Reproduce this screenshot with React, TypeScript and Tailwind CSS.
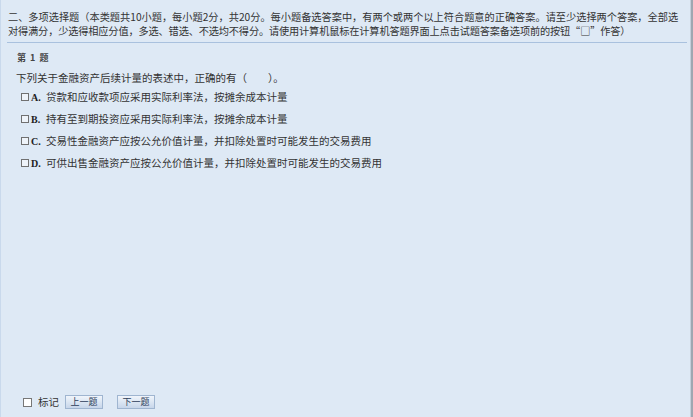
import React from "react";

const cjk = "font-['Noto_Sans_CJK_SC','Noto_Sans',sans-serif]";

function Box() {
  return <span className="inline-block w-[8px] h-[8px] border border-[#707070] bg-[#eef3f9] shrink-0" />;
}

const options = [
  { k: "A.", t: "贷款和应收款项应采用实际利率法，按摊余成本计量" },
  { k: "B.", t: "持有至到期投资应采用实际利率法，按摊余成本计量" },
  { k: "C.", t: "交易性金融资产应按公允价值计量，并扣除处置时可能发生的交易费用" },
  { k: "D.", t: "可供出售金融资产应按公允价值计量，并扣除处置时可能发生的交易费用" },
];

export default function App() {
  return (
    <div className={`w-[693px] h-[417px] bg-[#dee9f5] flex overflow-hidden text-[#333333] ${cjk}`}>
      <div className="flex-1 flex flex-col border-l border-[#c9d9ec] min-w-0">
        <div className="ml-[6px] mr-[3px] pt-[10px] pb-[4px] border-b border-[#a9c1de] text-[10.2px] leading-[14px] whitespace-nowrap pl-[1px]">
          <div>二、多项选择题（本类题共10小题，每小题2分，共20分。每小题备选答案中，有两个或两个以上符合题意的正确答案。请至少选择两个答案，全部选</div>
          <div className="tracking-[-0.15px]">对得满分，少选得相应分值，多选、错选、不选均不得分。请使用计算机鼠标在计算机答题界面上点击试题答案备选项前的按钮“□”作答）</div>
        </div>
        <div className="pl-[16px] pt-[9px] text-[9px] leading-[12px] font-semibold text-[#444] whitespace-pre [word-spacing:2px]">第 1 题</div>
        <div className="pl-[15px] mt-[7px] text-[10.5px] leading-[14px] whitespace-nowrap">
          下列关于金融资产后续计量的表述中，正确的有（　　）。
        </div>
        <div className="flex flex-col gap-[8px] mt-[5px] pl-[20px]">
          {options.map((o) => (
            <div key={o.k} className="flex items-center h-[14px] text-[10.5px] whitespace-nowrap">
              <Box />
              <span className="w-[17px] pl-[2px] font-['Liberation_Serif',serif] font-bold text-[10px] text-[#222]">{o.k}</span>
              <span>{o.t}</span>
            </div>
          ))}
        </div>
        <div className="mt-auto mb-[8px] pl-[22px] flex items-center h-[14px] text-[10.5px]">
          <span className="inline-block w-[9px] h-[9px] border border-[#777] bg-white" />
          <span className="ml-[6px]">标记</span>
          <button className="ml-[6px] w-[38px] h-[14px] border border-[#9fb5d0] bg-gradient-to-b from-[#f0f5fb] to-[#c7d6ea] text-[9px] leading-[12px] text-[#2d3d5a]">上一题</button>
          <button className="ml-[14px] w-[38px] h-[14px] border border-[#9fb5d0] bg-gradient-to-b from-[#f0f5fb] to-[#c7d6ea] text-[9px] leading-[12px] text-[#2d3d5a]">下一题</button>
        </div>
      </div>
      <div className="w-[1px] bg-[#c4cfdb]" />
      <div className="w-[2px] bg-[#9ea7b1]" />
    </div>
  );
}
